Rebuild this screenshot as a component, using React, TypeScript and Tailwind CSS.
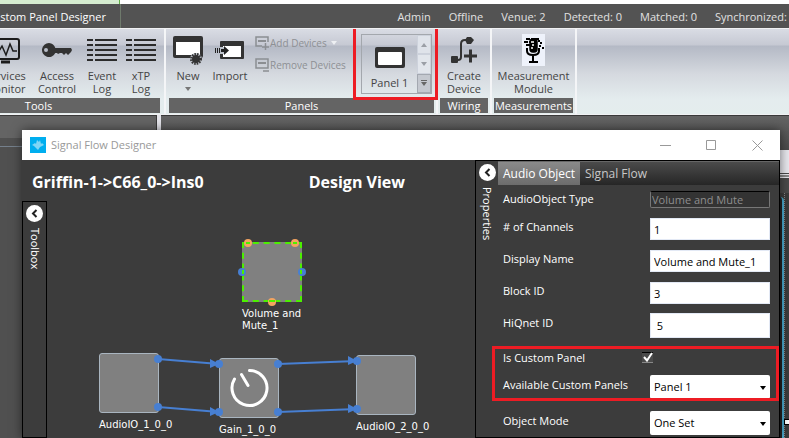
import type { ReactNode } from "react";
import clsx from "clsx";

const statuses = ["Admin", "Offline", "Venue: 2", "Detected: 0", "Matched: 0", "Synchronized: 0"];

function RibbonGroup({ title, className, children }: { title: string; className?: string; children: ReactNode }) {
  return (
    <section className={clsx("flex shrink-0 flex-col border-r-2 border-[#f4f5f7]", className)}>
      <div className="flex flex-1">{children}</div>
      <h2 className="mb-px h-[15px] bg-[#646464] text-center text-[11px] leading-[15px] text-white">{title}</h2>
    </section>
  );
}

function RibbonButton({ lines, className, menu, children }: { lines: string[]; className: string; menu?: boolean; children: ReactNode }) {
  return (
    <button type="button" className={clsx("flex shrink-0 flex-col items-center pt-1 leading-[13px]", className)}>
      <span className="flex h-9 items-center justify-center pb-[2px]">{children}</span>
      {lines.map((line) => (
        <span key={line} className="whitespace-nowrap">{line}</span>
      ))}
      {menu && <Caret className="mt-[5px] text-[#777]" />}
    </button>
  );
}

function MonitorIcon() {
  return (
    <svg width="30" height="28" viewBox="0 0 30 28" fill="none" stroke="#1c1c1c" strokeWidth="2">
      <rect x="1" y="3" width="28" height="20" rx="2" />
      <path d="M3 15h6l3-5 4 9 4-11 3 7h4" strokeWidth="1.5" />
      <path d="M11 26h9" strokeWidth="3" />
    </svg>
  );
}

function KeyIcon() {
  return (
    <svg width="32" height="16" viewBox="0 0 32 16" fill="#333">
      <path fillRule="evenodd" d="M8 1a7 7 0 1 0 6.3 10H16l1 1 2-1h2l2 2 2-2 2 2 3-3 1-2-1-2H14.3A7 7 0 0 0 8 1ZM5 6a2 2 0 1 1 0 4 2 2 0 0 1 0-4Z" />
    </svg>
  );
}

function LogIcon() {
  return (
    <svg width="30" height="24" viewBox="0 0 30 24" stroke="#2b2b2b" strokeWidth="2">
      {[2, 7, 12, 17, 22].map((y) => (
        <path key={y} d={`M0 ${y}h6M8 ${y}h22`} />
      ))}
    </svg>
  );
}

function NewPanelIcon() {
  return (
    <svg width="32" height="32" viewBox="0 0 32 32">
      <rect x="1" y="2" width="30" height="22" rx="2" fill="#333" />
      <rect x="4" y="8" width="24" height="13" fill="#fff" />
      <circle cx="24" cy="25" r="6" fill="#c0c4cc" />
      <circle cx="24" cy="25" r="4" fill="#333" />
      <circle cx="24" cy="25" r="4.5" fill="none" stroke="#333" strokeWidth="3" strokeDasharray="1.4 1" />
    </svg>
  );
}

function ImportIcon() {
  return (
    <svg width="30" height="20" viewBox="0 0 30 20">
      <rect x="5" y="1" width="24" height="18" rx="1" fill="#333" />
      <rect x="8" y="6" width="18" height="11" fill="#fff" />
      <path d="M5 7h4v7H5z" fill="#bfc4cd" />
      <path d="M0 8h1v5H0zM2 8h1v5H2zM4 8h1v5H4zM6 9h3V6l5 4.500L9 15v-3H6z" fill="#222" />
    </svg>
  );
}

function WireIcon() {
  return (
    <svg width="28" height="28" viewBox="0 0 28 28" fill="none" stroke="#333" strokeWidth="2">
      <path d="M5 24h3q3 0 3-3V8q0-4 4-4h4" />
      <path d="M14 20h13M20.500 13.500v13" strokeWidth="3" />
      <rect x="1" y="20" width="7" height="7" rx="1" fill="#333" stroke="none" />
      <path d="M15 4l2-3h4l3 3-3 4h-4z" fill="#333" stroke="none" />
    </svg>
  );
}

function MicIcon() {
  return (
    <svg width="23" height="32" viewBox="0 0 23 32" fill="none" stroke="#000" strokeWidth="1.5">
      <path d="M0 0h23v32H0z" fill="#eef2fb" stroke="none" />
      <path d="M4 5h4M9 5h8M2 8h4M4 11h5M7 8h3M18 9h2M16 7h2M17 12h2M20 14h2" strokeWidth="2" />
      <rect x="8" y="5" width="7" height="13" rx="3" fill="#000" />
      <path d="M9 8h3M10 11h2M9 14h2" stroke="#fff" />
      <path d="M5 14v3q0 4 6 4t6-4v-3M11 21v7M7 28h9" strokeWidth="2" />
    </svg>
  );
}

function DeviceIcon({ plus }: { plus?: boolean }) {
  return (
    <svg width="15" height="15" viewBox="0 0 15 15" fill="none" stroke="#8b8e92" strokeWidth="1.5">
      <path d={plus ? "M7 10H1V1h12v5" : "M1 1h12v9H1z"} />
      <path d="M3 5h8" strokeWidth="2" />
      {plus ? <path d="M7 11h7M10.500 7v7" /> : <path d="M8 13h6" />}
    </svg>
  );
}

function Caret({ className }: { className?: string }) {
  return (
    <svg width="6" height="4" viewBox="0 0 6 4" className={clsx("shrink-0", className)} fill="currentColor">
      <path d="M0 0h6L3 4z" />
    </svg>
  );
}

function Ribbon() {
  return (
    <div className="flex h-[87px] shrink-0 overflow-hidden border-y border-[#f0f1f3] bg-[linear-gradient(#d9dce4_0,#c6c9d3_16px,#b4b9c5_17px,#d5d9df_45px,#e4ecee_70px,#e4eded)] text-[11px] text-[#444]">
      <RibbonGroup title="Tools" className="-ml-[87px] w-[253px] px-1">
        <div className="flex flex-1 justify-end">
          <RibbonButton lines={["Services", "Monitor"]} className="w-[54px]"><MonitorIcon /></RibbonButton>
          <RibbonButton lines={["Access", "Control"]} className="w-[50px]"><KeyIcon /></RibbonButton>
          <RibbonButton lines={["Event", "Log"]} className="w-[40px]"><LogIcon /></RibbonButton>
          <RibbonButton lines={["xTP", "Log"]} className="w-[38px]"><LogIcon /></RibbonButton>
        </div>
      </RibbonGroup>

      <RibbonGroup title="Panels" className="w-[272px] pl-[3px] pr-[2px]">
        <RibbonButton lines={["New"]} menu className="w-[38px]"><NewPanelIcon /></RibbonButton>
        <RibbonButton lines={["Import"]} className="w-[46px]"><ImportIcon /></RibbonButton>
        <div className="flex w-[108px] flex-col gap-1 pl-[2px] pt-[5px] text-[10px] text-[#8d9094]">
          <button type="button" disabled className="flex h-[18px] items-center whitespace-nowrap">
            <DeviceIcon plus />
            Add Devices
            <Caret className="ml-1 text-[#eef0f3]" />
          </button>
          <button type="button" disabled className="flex h-[18px] items-center whitespace-nowrap">
            <DeviceIcon />
            Remove Devices
          </button>
        </div>
        <div className="relative mt-[5px] flex h-[60px] w-[71px] border border-[#a3a7ad]">
          <button type="button" className="flex flex-1 flex-col items-center justify-between pb-1 pt-3">
            <svg width="30" height="21" viewBox="0 0 30 21">
              <rect width="30" height="21" rx="2" fill="#333" />
              <rect x="3" y="5" width="24" height="13" rx="1" fill="#fff" />
            </svg>
            <span className="leading-[13px]">Panel 1</span>
          </button>
          <div className="flex w-[14px] flex-col text-[#9b9fa6]">
            <button type="button" aria-label="Scroll up" className="flex flex-1 items-center justify-center border border-[#cdd2dc] bg-[#dfe3ea]">
              <Caret className="rotate-180" />
            </button>
            <button type="button" aria-label="Scroll down" className="flex flex-1 items-center justify-center border border-[#cdd2dc] bg-[#e2e6ec]">
              <Caret />
            </button>
            <button type="button" aria-label="Show all panels" className="flex flex-1 flex-col items-center justify-center gap-px border border-[#a3a8b0] bg-[#c4c8cf] text-[#666]">
              <span className="h-px w-[6px] bg-[#666]" />
              <Caret />
            </button>
          </div>
          <div className="pointer-events-none absolute -left-[9px] -top-[9px] h-[74px] w-[85px] border-[3px] border-[#ed1c24]" />
        </div>
      </RibbonGroup>

      <RibbonGroup title="Wiring" className="w-[54px] px-[2px]">
        <RibbonButton lines={["Create", "Device"]} className="w-full"><WireIcon /></RibbonButton>
      </RibbonGroup>

      <RibbonGroup title="Measurements" className="w-[85px] px-[2px]">
        <RibbonButton lines={["Measurement", "Module"]} className="w-full"><MicIcon /></RibbonButton>
      </RibbonGroup>
    </div>
  );
}

function CollapseStrip({ title }: { title: string }) {
  return (
    <div className="flex flex-col items-center gap-[6px] pt-[2px]">
      <button type="button" aria-label={`Collapse ${title}`} className="flex size-[17px] items-center justify-center rounded-full bg-white">
        <svg width="7" height="9" viewBox="0 0 7 9" fill="none" stroke="#222" strokeWidth="2">
          <path d="M5.500 1 2 4.500 5.500 8" />
        </svg>
      </button>
      <span className="text-[11px] font-medium leading-[16px] text-white [writing-mode:vertical-rl]">{title}</span>
    </div>
  );
}

const nodes = [
  { name: "Volume and Mute_1", x: 195, y: 41, selected: true },
  { name: "AudioIO_1_0_0", x: 52, y: 152 },
  { name: "Gain_1_0_0", x: 172, y: 157, dial: true },
  { name: "AudioIO_2_0_0", x: 309, y: 154 },
];

const wires = [
  [111, 158, 172, 163],
  [111, 206, 172, 211],
  [231, 163, 310, 160],
  [231, 211, 310, 208],
];

function Canvas() {
  return (
    <div className="relative flex-1">
      {nodes.map((node) => (
        <div key={node.name} className="absolute w-[60px]" style={{ left: node.x, top: node.y }}>
          <div
            className={clsx(
              "flex size-[60px] items-center justify-center bg-[#808080]",
              node.selected ? "border-2 border-dashed border-[#4cf000]" : "rounded-[3px] border border-[#a9b5c0]",
            )}
          >
            {node.dial && (
              <svg width="40" height="40" viewBox="0 0 40 40" fill="none" stroke="#fff" strokeWidth="3" strokeLinecap="round">
                <path d="M20.500 2.500A17.500 17.500 0 1 1 5.500 11M12.500 6.500 19 17.500" />
              </svg>
            )}
          </div>
          <p className={clsx("mt-[6px] text-[10px] leading-[12px] text-white [font-family:'DejaVu_Sans',sans-serif]", !node.selected && "whitespace-nowrap")}>
            {node.name}
          </p>
        </div>
      ))}
      <svg className="pointer-events-none absolute left-0 top-0" width="400" height="236" fill="#477fd2">
        {wires.map(([x1, y1, x2, y2]) => (
          <g key={`${x1}-${y1}`}>
            <path d={`M${x1} ${y1}L${x2} ${y2}`} stroke="#477fd2" strokeWidth="2" />
            <path d={`M${x2 - 9} ${y2 - 5}L${x2} ${y2}L${x2 - 9} ${y2 + 4}z`} />
            <circle cx={x1} cy={y1} r="4" />
            <circle cx={x2} cy={y2} r="4" />
          </g>
        ))}
        <circle cx="195" cy="71" r="4" />
        <circle cx="255" cy="71" r="4" />
        <g fill="#f4a460">
          <circle cx="201" cy="42" r="4" />
          <circle cx="248" cy="42" r="4" />
          <circle cx="225" cy="101" r="4" />
        </g>
        <path d="M199 42h4M246 42h4M222 100h6M196 69v4M254 69v4" stroke="#4cf000" strokeWidth="2" />
      </svg>
    </div>
  );
}

function Field({ label, id, className, children }: { label: string; id: string; className?: string; children: ReactNode }) {
  return (
    <div className={clsx("flex shrink-0 items-center justify-between", className)}>
      <label htmlFor={id} className="whitespace-nowrap leading-[14px]">{label}</label>
      {children}
    </div>
  );
}

function PanelSelect({ id, options }: { id: string; options: string[] }) {
  return (
    <div className="relative w-[120px]">
      <select id={id} className="h-6 w-full appearance-none rounded-[2px] bg-white pl-1 text-black">
        {options.map((option) => (
          <option key={option}>{option}</option>
        ))}
      </select>
      <Caret className="pointer-events-none absolute right-1 top-[11px] text-black" />
    </div>
  );
}

const row = "h-8 [&>label]:pb-1";
const input = "h-[22px] w-[120px] border border-[#e3e9f5] bg-white px-[3px] text-black";

function Properties() {
  return (
    <aside className="flex w-[305px] shrink-0 border border-black">
      <div className="w-[22px] shrink-0 pt-px">
        <CollapseStrip title="Properties" />
      </div>
      <div className="flex flex-1 flex-col">
        <div role="tablist" className="flex h-6 shrink-0 border-t border-[#666] bg-[linear-gradient(#4b4b4b,#262626)] text-[12px]">
          <button type="button" role="tab" aria-selected="true" className="w-[82px] bg-[linear-gradient(#8a8a8a,#6c6c6c)] text-white">Audio Object</button>
          <button type="button" role="tab" aria-selected="false" className="px-[5px] text-[#c8c8c8]">Signal Flow</button>
        </div>
        <form className="relative flex flex-col pl-[5px] pr-[9px] text-[11px] text-white">
          <Field label="AudioObject Type" id="type" className="h-7">
            <input id="type" readOnly defaultValue="Volume and Mute" className="h-[17px] w-[120px] rounded-[2px] border border-[#777] border-t-black bg-[#333] px-px text-[#8e8e8e]" />
          </Field>
          <Field label="# of Channels" id="channels" className={row}>
            <input id="channels" defaultValue="1" className={input} />
          </Field>
          <Field label="Display Name" id="display-name" className={row}>
            <input id="display-name" defaultValue="Volume and Mute_1" className={input} />
          </Field>
          <Field label="Block ID" id="block-id" className={row}>
            <input id="block-id" defaultValue="3" className={input} />
          </Field>
          <Field label="HiQnet ID" id="hiqnet-id" className={row}>
            <input id="hiqnet-id" defaultValue=" 5" className="h-[25px] w-[120px] border border-[#e3e9f5] bg-white px-[3px] text-black" />
          </Field>
          <Field label="Is Custom Panel" id="is-custom" className="h-[30px] pt-[3px]">
            <span className="relative mr-[117px] size-[11px]">
              <input id="is-custom" type="checkbox" defaultChecked className="block size-[11px] appearance-none border-b border-t border-b-[#888] border-t-black bg-[#4a4a4a]" />
              <svg className="pointer-events-none absolute left-px top-0" width="10" height="10" viewBox="0 0 10 10" fill="none" stroke="#fff" strokeWidth="2">
                <path d="M1 5l3 3.500L9 1" />
              </svg>
            </span>
          </Field>
          <Field label="Available Custom Panels" id="custom-panel" className={row}>
            <PanelSelect id="custom-panel" options={["Panel 1"]} />
          </Field>
          <Field label="Object Mode" id="object-mode" className="mt-1 h-8 [&>label]:pb-1">
            <PanelSelect id="object-mode" options={["One Set"]} />
          </Field>
          <div className="pointer-events-none absolute -left-[6px] right-0 top-[161px] h-[55px] border-[3px] border-[#ed1c24]" />
        </form>
      </div>
    </aside>
  );
}

function DesignerWindow() {
  return (
    <div className="absolute bottom-0 left-[22px] right-[9px] top-[15px] flex flex-col bg-[#3c3c3c] shadow-[0_0_10px_#0008]">
      <div className="flex h-[30px] shrink-0 items-center bg-white pl-2">
        <svg width="16" height="16" viewBox="0 0 16 16">
          <rect width="16" height="16" fill="#00aeef" />
          <path d="M2 8l3-2 1 1 1-4 2 2 1-2 1 4 1-1 2 2-2 1-2 1-2 3-2-2-2-2z" fill="#7fd6f6" />
        </svg>
        <h1 className="ml-[5px] flex-1 text-[11px] text-[#999]">Signal Flow Designer</h1>
        <div className="flex gap-[35px] pr-[17px] text-[#999]">
          <button type="button" aria-label="Minimize">
            <svg width="11" height="11" viewBox="0 0 11 11" stroke="currentColor"><path d="M0 5.500h11" /></svg>
          </button>
          <button type="button" aria-label="Maximize">
            <svg width="11" height="11" viewBox="0 0 11 11" fill="none" stroke="currentColor"><path d="M.5.500h9v9h-9z" /></svg>
          </button>
          <button type="button" aria-label="Close">
            <svg width="11" height="11" viewBox="0 0 11 11" stroke="currentColor"><path d="M.5.500l10 10M10.500.500l-10 10" /></svg>
          </button>
        </div>
      </div>
      <div className="flex min-h-0 flex-1">
        <main className="flex min-w-0 flex-1 flex-col">
          <div className="flex h-[41px] shrink-0 items-center justify-between pl-[10px] pr-[70px] pt-[2px] text-[16px] font-bold text-white">
            <h2>Griffin-1-&gt;C66_0-&gt;Ins0</h2>
            <h2>Design View</h2>
          </div>
          <div className="flex min-h-0 flex-1">
            <div className="w-[25px] shrink-0 border border-black pt-px">
              <CollapseStrip title="Toolbox" />
            </div>
            <Canvas />
          </div>
        </main>
        <Properties />
      </div>
    </div>
  );
}

export default function App() {
  return (
    <div className="flex h-screen flex-col overflow-hidden bg-[#535353] [font-family:'Open_Sans','Noto_Sans',sans-serif]">
      <div className="flex h-1 shrink-0 bg-white">
        <div className="w-[120px] border-r border-[#5fae46] bg-[#d5ecd0]" />
      </div>
      <header className="flex h-6 shrink-0 items-center justify-between overflow-hidden bg-[#535353] text-white">
        <div className="flex h-full w-[121px] shrink-0 items-center justify-end whitespace-nowrap border-r border-[#6f7a6c] pr-[14px] pt-[3px] text-[11px]">Custom Panel Designer</div>
        <div className="-mr-[7px] flex shrink-0 gap-[18px] whitespace-nowrap pt-[3px] text-[11px] text-[#e2e2e2]">
          {statuses.map((status) => (
            <span key={status}>{status}</span>
          ))}
        </div>
      </header>
      <Ribbon />
      <div className="relative flex min-h-0 flex-1 bg-[#505050]">
        <div className="w-[157px] border-t border-[#3a3a3a]">
          <div className="h-[22px] border-r border-[#3a3a3a] bg-[#646464]" />
          <div className="mt-2 h-px bg-[#75808c]" />
        </div>
        <div className="w-1 bg-[#e4e4ea]" />
        <div className="flex flex-1 flex-col border-t border-[#3a3a3a] bg-[linear-gradient(#646464,#4a4a4a_35px)]">
          <div className="mt-[34px] h-[23px] bg-[#e8e8ee]" />
          <div className="mt-px h-1 border-y border-[#e8e8ee] bg-[#888]" />
          <div className="mt-[15px] flex flex-1 justify-end bg-[#3c3c3c]">
            <div className="mt-1 w-1 rounded-tr border-r-2 border-[#4bacd0] bg-[#222]" />
            <div className="relative w-[5px] border-l border-dotted border-[#888]">
              <div className="absolute -left-px bottom-[13px] size-[6px] border border-black bg-white" />
            </div>
          </div>
        </div>
        <DesignerWindow />
      </div>
    </div>
  );
}
